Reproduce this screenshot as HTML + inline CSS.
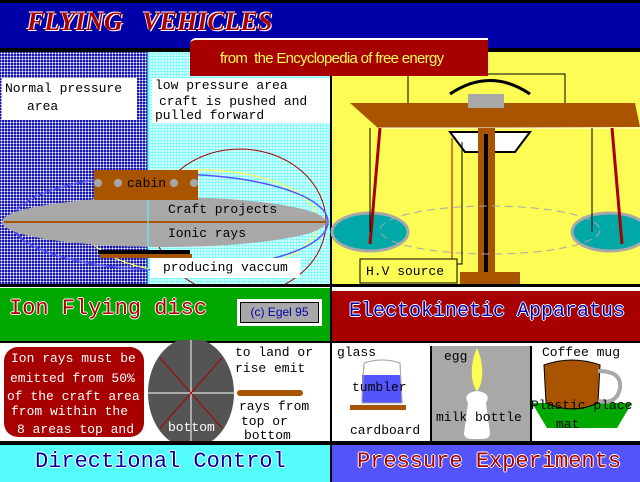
<!DOCTYPE html>
<html><head><meta charset="utf-8"><style>
*{margin:0;padding:0;box-sizing:border-box}
body{width:640px;height:482px;overflow:hidden;background:#fff;position:relative;font-family:"Liberation Mono",monospace}
.a{position:absolute}
.t{position:absolute;font-family:"Liberation Mono",monospace;color:#000;white-space:nowrap;line-height:1}
.big{font-size:22px;letter-spacing:0px}
</style></head><body>
<!-- header -->
<div class="a" style="left:0;top:0;width:640px;height:3px;background:#000"></div>
<div class="a" style="left:0;top:3px;width:640px;height:45px;background:#0000a8"></div>
<div class="t" style="left:27px;top:9px;font-family:'Liberation Serif',serif;font-style:italic;font-weight:bold;font-size:26px;color:#a80000;text-shadow:-1px -1px 0 #fff,1px 1px 0 #fff;letter-spacing:0px">FLYING&nbsp;&nbsp;&nbsp;VEHICLES</div>
<div class="a" style="left:0;top:48px;width:640px;height:4px;background:#000"></div>
<!-- left panel -->
<div class="a" style="left:0;top:52px;width:148px;height:232px;background-color:#1818b0;background-image:radial-gradient(circle,#fff 0.8px,transparent 1px);background-size:3px 3px"></div>
<div class="a" style="left:148px;top:52px;width:184px;height:232px;background-color:#d8fcfc;background-image:radial-gradient(circle,#54fcfc 0.9px,transparent 1.1px);background-size:3px 3px"></div>
<div class="a" style="left:2px;top:78px;width:135px;height:42px;background:#fff"></div>
<div class="t" style="left:5px;top:82px;font-size:13px">Normal pressure</div>
<div class="t" style="left:27px;top:100px;font-size:13px">area</div>
<div class="a" style="left:152px;top:78px;width:178px;height:45px;background:#fff"></div>
<div class="t" style="left:155px;top:79px;font-size:13px">low pressure area</div>
<div class="t" style="left:159px;top:95px;font-size:13px">craft is pushed and</div>
<div class="t" style="left:155px;top:109px;font-size:13px">pulled forward</div>
<svg class="a" style="left:0;top:52px" width="332" height="232">
<ellipse cx="240" cy="170" rx="86" ry="73" fill="none" stroke="#a80000" stroke-width="1"/>
<ellipse cx="200" cy="170" rx="118" ry="52" fill="none" stroke="#fcfc54" stroke-width="1.2"/>
<ellipse cx="170" cy="170" rx="158" ry="48" fill="none" stroke="#5454fc" stroke-width="1.5"/>
<ellipse cx="164" cy="170" rx="162" ry="25" fill="#a8a8a8"/>
<line x1="4" y1="170" x2="326" y2="170" stroke="#a85400" stroke-width="2"/>
<line x1="148" y1="0" x2="148" y2="232" stroke="#54fcfc" stroke-width="1"/>
<rect x="94" y="118" width="104" height="30" fill="#a85400"/>
<circle cx="98" cy="131" r="4" fill="#a8a8a8"/><circle cx="118" cy="131" r="4" fill="#a8a8a8"/><circle cx="174" cy="131" r="4" fill="#a8a8a8"/><circle cx="194" cy="131" r="4" fill="#a8a8a8"/>
<rect x="98" y="198" width="92" height="4" fill="#000"/><rect x="100" y="202" width="92" height="4" fill="#a85400"/>
<rect x="150" y="206" width="150" height="20" fill="#fff"/>
</svg>
<div class="t" style="left:127px;top:177px;font-size:13px">cabin</div>
<div class="t" style="left:168px;top:203px;font-size:13px">Craft projects</div>
<div class="t" style="left:168px;top:227px;font-size:13px">Ionic rays</div>
<div class="t" style="left:163px;top:261px;font-size:13px">producing vaccum</div>
<!-- right panel -->
<div class="a" style="left:330px;top:52px;width:310px;height:233px;background:#fcfc54;border-left:2px solid #000"></div>
<svg class="a" style="left:330px;top:52px" width="310" height="233">
<path d="M120 42 Q160 15 200 42" fill="none" stroke="#000" stroke-width="3"/>
<polyline points="78,53 78,22 235,22 235,60" fill="none" stroke="#000"/>
<path d="M20 51 L305 51 L310 75 L48 76 Z" fill="#a85400"/>
<line x1="48" y1="76" x2="310" y2="76" stroke="#fff" stroke-width="1"/>
<rect x="138" y="42" width="36" height="14" fill="#a8a8a8"/>
<path d="M120 80 L200 80 L185 100 L135 100 Z" fill="#fff" stroke="#000" stroke-width="2"/>
<rect x="148" y="76" width="17" height="150" fill="#a85400"/>
<rect x="154" y="82" width="4" height="140" fill="#000"/>
<ellipse cx="40" cy="180" rx="38" ry="19" fill="#00a8a8" stroke="#a8a8a8" stroke-width="3"/>
<ellipse cx="280" cy="180" rx="38" ry="19" fill="#00a8a8" stroke="#a8a8a8" stroke-width="3"/>
<ellipse cx="160" cy="178" rx="110" ry="24" fill="none" stroke="#a8a8a8" stroke-dasharray="8 5"/>
<line x1="50" y1="76" x2="40" y2="192" stroke="#a80000" stroke-width="3"/>
<line x1="282" y1="76" x2="292" y2="192" stroke="#a80000" stroke-width="3"/>
<line x1="40" y1="76" x2="40" y2="180" stroke="#000"/>
<line x1="262" y1="76" x2="262" y2="180" stroke="#000"/>
<line x1="122" y1="86" x2="122" y2="218" stroke="#a80000"/>
<polyline points="132,90 132,212 115,212 115,230" fill="none" stroke="#000"/>
<path d="M130 220 L190 220 L190 233 L130 233 Z" fill="#a85400"/>
<rect x="30" y="207" width="97" height="24" fill="#fcfc54" stroke="#000"/>
</svg>
<div class="t" style="left:366px;top:265px;font-size:13px">H.V source</div>
<!-- banner -->
<div class="a" style="left:190px;top:38px;width:298px;height:38px;background:#a80000;border-top:2px solid #fff;border-radius:6px 0 0 0"></div>
<div class="t" style="left:220px;top:51px;font-family:'Liberation Sans',sans-serif;font-size:15px;color:#fcfc54;letter-spacing:-0.7px">from&nbsp; the Encyclopedia of free energy</div>
<!-- separators -->
<div class="a" style="left:0;top:284px;width:640px;height:3px;background:#000"></div>
<!-- green -->
<div class="a" style="left:0;top:288px;width:330px;height:53px;background:#00a800"></div>
<div class="t big" style="left:9px;top:298px;color:#a80000;text-shadow:-1px 0 #fff,1px 0 #fff,0 1px #fff,0 -1px #fff">Ion Flying disc</div>
<div class="a" style="left:237px;top:299px;width:85px;height:27px;background:#fff;padding:3px"><div style="width:100%;height:100%;background:#a8a8a8;border:1px solid #000;font-family:'Liberation Sans',sans-serif;font-size:12px;color:#0000a8;text-align:center;line-height:19px">(c) Egel 95</div></div>
<!-- red -->
<div class="a" style="left:332px;top:289px;width:308px;height:52px;background:#a80000;border-top:2px solid #fff"></div>
<div class="t" style="left:349px;top:302px;font-size:20px;color:#0000a8;text-shadow:-1px 0 #fff,1px 0 #fff,0 1px #fff,0 -1px #fff">Electokinetic Apparatus</div>
<div class="a" style="left:330px;top:285px;width:2px;height:197px;background:#000"></div>
<!-- middle white row -->
<div class="a" style="left:0;top:341px;width:640px;height:2px;background:#000"></div>
<div class="a" style="left:4px;top:347px;width:140px;height:90px;background:#a80000;border-radius:14px"></div>
<div class="t" style="left:11px;top:352px;font-size:13px;color:#fff">Ion rays must be</div>
<div class="t" style="left:10px;top:372px;font-size:13px;color:#fff">emitted from 50%</div>
<div class="t" style="left:7px;top:390px;font-size:13px;color:#fff">of the craft area</div>
<div class="t" style="left:11px;top:405px;font-size:13px;color:#fff">from within the</div>
<div class="t" style="left:17px;top:423px;font-size:13px;color:#fff">8 areas top and</div>
<svg class="a" style="left:140px;top:340px" width="200" height="105">
<ellipse cx="51" cy="53" rx="43" ry="55" fill="#545454"/>
<line x1="51" y1="0" x2="51" y2="105" stroke="#fff"/>
<line x1="8" y1="53" x2="98" y2="53" stroke="#fff"/>
<line x1="20" y1="18" x2="82" y2="88" stroke="#a80000"/>
<line x1="82" y1="18" x2="20" y2="88" stroke="#a80000"/>
<rect x="97" y="50" width="66" height="6" rx="3" fill="#a85400"/>
</svg>
<div class="t" style="left:168px;top:421px;font-size:13px;color:#fff">bottom</div>
<div class="t" style="left:235px;top:346px;font-size:13px">to land or</div>
<div class="t" style="left:235px;top:362px;font-size:13px">rise emit</div>
<div class="t" style="left:239px;top:400px;font-size:13px">rays from</div>
<div class="t" style="left:241px;top:415px;font-size:13px">top or</div>
<div class="t" style="left:244px;top:429px;font-size:13px">bottom</div>
<!-- right experiments -->
<div class="a" style="left:430px;top:346px;width:2px;height:96px;background:#000"></div>
<div class="a" style="left:432px;top:346px;width:98px;height:96px;background:#a8a8a8"></div>
<div class="a" style="left:530px;top:346px;width:2px;height:96px;background:#000"></div>
<svg class="a" style="left:332px;top:343px" width="308" height="99">
<path d="M30 55 L32 20 Q50 14 68 20 L70 60 Z" fill="#fff" stroke="#a8a8a8"/>
<path d="M30 32 L68 32 L70 60 L30 60 Z" fill="#5454fc"/>
<path d="M30 55 L32 20 Q50 14 68 20 L70 60 L30 60 Z" fill="none" stroke="#a8a8a8"/>
<rect x="18" y="62" width="56" height="5" fill="#a85400"/>
<path d="M145 5 C138 20 138 40 145 48 C152 40 152 20 145 5 Z" fill="#fcfc54"/>
<path d="M136 60 Q130 50 145 48 Q160 50 154 60 L158 90 Q158 96 150 96 L140 96 Q132 96 132 90 Z" fill="#fff"/>
<path d="M200 60 L300 60 L285 85 L215 85 Z" fill="#00a800"/>
<path d="M212 22 Q240 12 268 22 L266 60 Q240 72 214 60 Z" fill="#a85400" stroke="#000"/>
<path d="M266 28 Q290 28 288 45 Q285 62 266 58" fill="none" stroke="#a8a8a8" stroke-width="4"/>
</svg>
<div class="t" style="left:337px;top:346px;font-size:13px">glass</div>
<div class="t" style="left:352px;top:381px;font-size:13px">tumbler</div>
<div class="t" style="left:350px;top:424px;font-size:13px">cardboard</div>
<div class="t" style="left:444px;top:350px;font-size:13px">egg</div>
<div class="t" style="left:436px;top:411px;font-size:13px">milk bottle</div>
<div class="t" style="left:542px;top:346px;font-size:13px">Coffee mug</div>
<div class="t" style="left:531px;top:399px;font-size:13px">Plastic place</div>
<div class="t" style="left:556px;top:418px;font-size:13px">mat</div>
<!-- bottom -->
<div class="a" style="left:0;top:441px;width:640px;height:4px;background:#000"></div>
<div class="a" style="left:0;top:445px;width:330px;height:37px;background:#54fcfc"></div>
<div class="t big" style="left:35px;top:451px;color:#0000a8;text-shadow:-1px 0 #fff,1px 0 #fff,0 1px #fff,0 -1px #fff">Directional Control</div>
<div class="a" style="left:332px;top:445px;width:308px;height:37px;background:#5454fc"></div>
<div class="t big" style="left:357px;top:451px;color:#a80000;text-shadow:-1px 0 #fff,1px 0 #fff,0 1px #fff,0 -1px #fff">Pressure Experiments</div>
<div class="a" style="left:330px;top:441px;width:2px;height:41px;background:#000"></div>
</body></html>
